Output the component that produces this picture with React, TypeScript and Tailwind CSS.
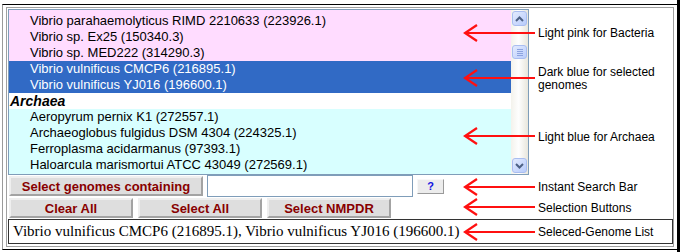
import React from "react";

type Row = { text: string; kind: "pink" | "sel" | "head" | "cyan" };

const rows: Row[] = [
  { text: "", kind: "pink" },
  { text: "Vibrio parahaemolyticus RIMD 2210633 (223926.1)", kind: "pink" },
  { text: "Vibrio sp. Ex25 (150340.3)", kind: "pink" },
  { text: "Vibrio sp. MED222 (314290.3)", kind: "pink" },
  { text: "Vibrio vulnificus CMCP6 (216895.1)", kind: "sel" },
  { text: "Vibrio vulnificus YJ016 (196600.1)", kind: "sel" },
  { text: "Archaea", kind: "head" },
  { text: "Aeropyrum pernix K1 (272557.1)", kind: "cyan" },
  { text: "Archaeoglobus fulgidus DSM 4304 (224325.1)", kind: "cyan" },
  { text: "Ferroplasma acidarmanus (97393.1)", kind: "cyan" },
  { text: "Haloarcula marismortui ATCC 43049 (272569.1)", kind: "cyan" },
  { text: "", kind: "cyan" },
];

function ListRow({ r }: { r: Row }) {
  if (r.kind === "head") {
    return (
      <div className="h-[16px] leading-[16px] pl-[1px] bg-white text-black text-[14px] font-bold italic whitespace-nowrap">
        {r.text}
      </div>
    );
  }
  const cls =
    r.kind === "pink"
      ? "bg-[#ffdcff] text-black"
      : r.kind === "sel"
      ? "bg-[#316ac5] text-white"
      : "bg-[#d8ffff] text-black";
  return (
    <div className={`h-[16px] leading-[16px] pl-[21px] text-[13px] whitespace-nowrap ${cls}`}>
      {r.text}
    </div>
  );
}

function ScrollBtn({ dir }: { dir: "up" | "down" }) {
  return (
    <div className="w-[15px] h-[15px] rounded-[3px] border border-[#a9bdf0] bg-[linear-gradient(135deg,#e3ebfe,#b7cbfb)] flex items-center justify-center">
      <svg width="9" height="6" viewBox="0 0 9 6">
        {dir === "up" ? (
          <polyline points="1,5 4.5,1.5 8,5" fill="none" stroke="#4d6185" strokeWidth="2" />
        ) : (
          <polyline points="1,1 4.5,4.5 8,1" fill="none" stroke="#4d6185" strokeWidth="2" />
        )}
      </svg>
    </div>
  );
}

function Btn({ children, w }: { children: React.ReactNode; w: string }) {
  return (
    <div
      className={`${w} h-[20px] flex items-center justify-center bg-[#dedede] border-2 border-t-[#efefef] border-l-[#efefef] border-r-[#a3a3a3] border-b-[#a3a3a3] text-[#880000] text-[13px] font-bold leading-none whitespace-nowrap`}
    >
      {children}
    </div>
  );
}

const arrowYs = [33, 78, 136, 187, 207, 232];

export default function App() {
  return (
    <div className="relative w-[684px] h-[252px] bg-white flex overflow-hidden font-['Liberation_Sans',Arial,sans-serif]">
      <div className="w-[677px] h-full pl-[2px] pt-[4px]">
        <div className="h-[246px] border-t border-t-black border-l border-l-[#9a9a9a] border-b border-b-black px-[3px] py-[2px]">
          <div className="h-full border border-[#a0a0a0] flex flex-col">
            <div className="flex">
              {/* left column */}
              <div className="w-[522px] pl-[1px] pt-[1px]">
                <div className="w-[521px] h-[166px] border border-[#7f9db9] flex">
                  <div className="flex-1 overflow-hidden">
                    <div className="mt-[-13px]">
                      {rows.map((r, i) => (
                        <ListRow key={i} r={r} />
                      ))}
                    </div>
                  </div>
                  <div className="w-[17px] h-full flex flex-col items-center py-[1px] bg-[linear-gradient(to_right,#f3f2ec,#fefefe_45%,#e8e6dc)]">
                    <ScrollBtn dir="up" />
                    <div className="mt-[19px] w-[15px] h-[14px] rounded-[3px] border border-[#a9bdf0] bg-[linear-gradient(135deg,#e3ebfe,#b9ccfb)] flex flex-col items-center justify-center gap-[1px]">
                      <div className="w-[6px] h-[1px] bg-[#8ca3df]" />
                      <div className="w-[6px] h-[1px] bg-[#8ca3df]" />
                      <div className="w-[6px] h-[1px] bg-[#8ca3df]" />
                      <div className="w-[6px] h-[1px] bg-[#8ca3df]" />
                    </div>
                    <div className="mt-auto">
                      <ScrollBtn dir="down" />
                    </div>
                  </div>
                </div>
                {/* search row */}
                <div className="h-[22px] flex items-center pl-[1px]">
                  <Btn w="w-[194px]">Select genomes containing</Btn>
                  <div className="ml-[4px] w-[206px] h-[22px] border border-[#7f9db9] bg-white" />
                  <div className="ml-[4px] w-[27px] h-[15px] bg-[#ececec] border border-t-[#f8f8f8] border-l-[#f8f8f8] border-r-[#9a9a9a] border-b-[#9a9a9a] flex items-center justify-center text-[#1010e0] text-[11px] font-bold leading-none">
                    ?
                  </div>
                </div>
                {/* selection buttons */}
                <div className="mt-[1px] h-[20px] flex gap-[5px] pl-[1px]">
                  <Btn w="w-[124px]">Clear All</Btn>
                  <Btn w="w-[124px]">Select All</Btn>
                  <Btn w="w-[124px]">Select NMPDR</Btn>
                </div>
              </div>
              {/* right column labels */}
              <div className="flex-1 pl-[9px] text-[12px] text-black">
                <div className="mt-[18px] leading-[14px]">Light pink for Bacteria</div>
                <div className="mt-[26px] leading-[13px]">
                  Dark blue for selected
                  <br />
                  genomes
                </div>
                <div className="mt-[38px] leading-[14px]">Light blue for Archaea</div>
                <div className="mt-[36px] leading-[14px]">Instant Search Bar</div>
                <div className="mt-[7px] leading-[14px]">Selection Buttons</div>
              </div>
            </div>
            {/* selected genome list */}
            <div className="mt-[1px] ml-[1px] w-[665px] h-[25px] border border-[#333] flex items-center">
              <div className="w-[529px] pl-[4px] font-['Liberation_Serif',serif] text-[15px] whitespace-nowrap">
                Vibrio vulnificus CMCP6 (216895.1), Vibrio vulnificus YJ016 (196600.1)
              </div>
              <div className="text-[12px] text-black">Seleced-Genome List</div>
            </div>
          </div>
        </div>
      </div>
      <div className="w-[3px] h-full bg-black" />
      <svg className="absolute inset-0 pointer-events-none" width="684" height="252">
        {arrowYs.map((y) => (
          <g key={y} stroke="#ff1010" strokeWidth="2.2" fill="none">
            <line x1="465" y1={y} x2="535" y2={y} />
            <polyline points={`477,${y - 8} 465,${y} 477,${y + 8}`} />
          </g>
        ))}
      </svg>
    </div>
  );
}
